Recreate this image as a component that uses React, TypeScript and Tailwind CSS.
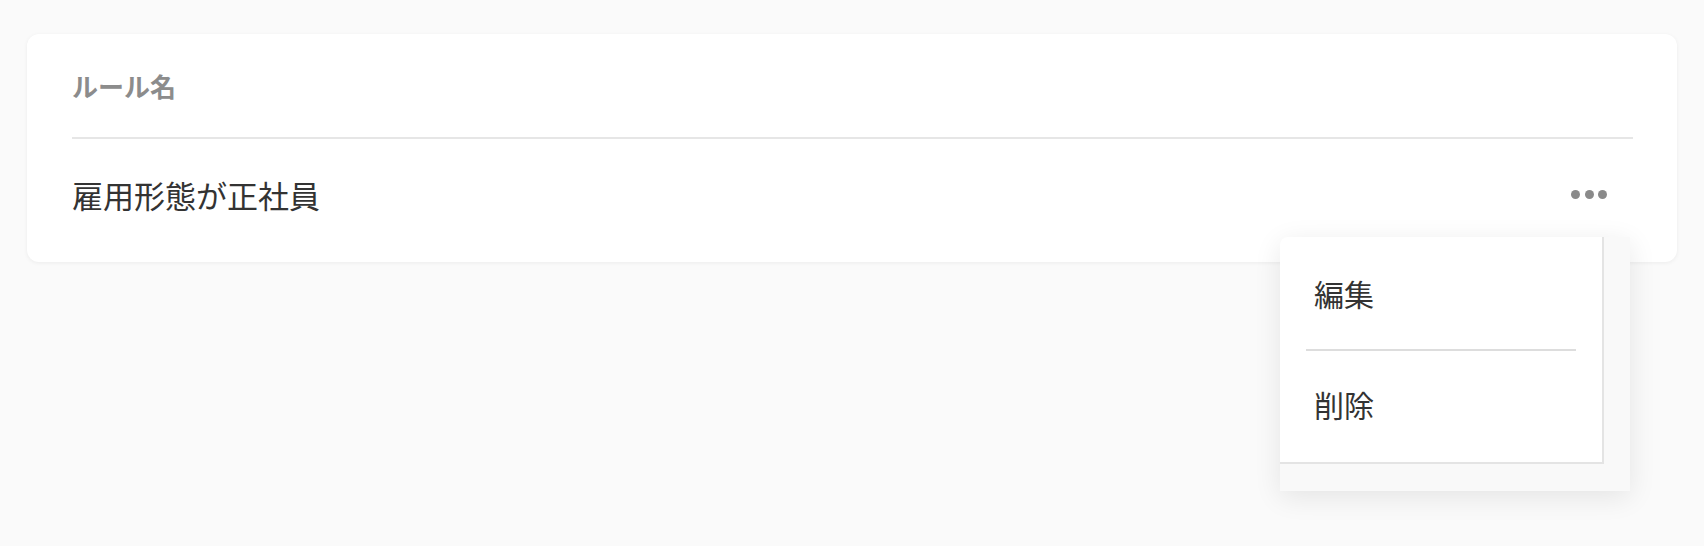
import React from "react";

export default function App() {
  return (
    <div
      className="relative h-[546px] w-full overflow-hidden bg-[#fafafa] px-[27px] pt-[34px]"
      style={{ fontFamily: '"Noto Sans CJK JP", "Noto Sans", sans-serif' }}
    >
      <div className="rounded-[12px] bg-white pb-[12px] pl-[45px] pr-[44px] shadow-[0_1px_4px_rgba(0,0,0,0.06)]">
        <div className="flex h-[105px] items-center border-b-2 border-[#e6e6e6]">
          <span className="text-[26px] font-bold leading-none text-[#8c8c8c]">ルール名</span>
        </div>
        <div className="flex h-[111px] items-center justify-between">
          <span className="text-[31px] leading-none text-[#333333]">雇用形態が正社員</span>
          <button className="mr-[26px] flex items-center gap-[4.5px]">
            <span className="block h-[9px] w-[9px] rounded-full bg-[#8a8a8a]" />
            <span className="block h-[9px] w-[9px] rounded-full bg-[#8a8a8a]" />
            <span className="block h-[9px] w-[9px] rounded-full bg-[#8a8a8a]" />
          </button>
        </div>
      </div>

      <div className="absolute left-[1280px] top-[237px] h-[254px] w-[350px] rounded-tl-[8px] bg-[#f9f9f9] shadow-[0_6px_28px_rgba(0,0,0,0.09)]">
        <div className="h-[227px] w-[324px] rounded-tl-[8px] border-b-2 border-r-2 border-[#e4e4e4] bg-white">
          <div className="flex h-[112px] items-center px-[34px]">
            <span className="text-[30px] leading-none text-[#333333]">編集</span>
          </div>
          <div className="mx-[26px] h-[2px] bg-[#dddddd]" />
          <div className="flex h-[106px] items-center px-[34px]">
            <span className="text-[30px] leading-none text-[#333333]">削除</span>
          </div>
        </div>
      </div>
    </div>
  );
}
